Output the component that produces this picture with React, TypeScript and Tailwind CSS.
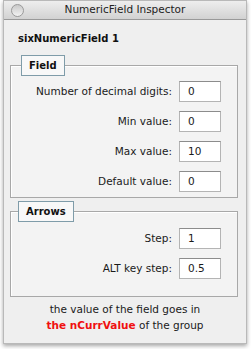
import React from 'react';

interface FieldRow {
  label: string;
  value: string;
}

const fieldRows: FieldRow[] = [
  { label: 'Number of decimal digits:', value: '0' },
  { label: 'Min value:', value: '0' },
  { label: 'Max value:', value: '10' },
  { label: 'Default value:', value: '0' },
];

const arrowRows: FieldRow[] = [
  { label: 'Step:', value: '1' },
  { label: 'ALT key step:', value: '0.5' },
];

const Row: React.FC<{ row: FieldRow }> = ({ row }) => (
  <div className="flex items-center justify-end gap-[7px]">
    <span className="text-[10.5px] text-[#1a1a1a]">{row.label}</span>
    <div className="w-[42px] h-[21px] bg-white border border-[#b4b4b4] border-t-[#8c8c8c] flex items-center pl-[8px] text-[10.5px] text-[#1a1a1a]">
      {row.value}
    </div>
  </div>
);

const GroupBox: React.FC<{ title: string; tabLeft: string; className: string; rows: FieldRow[] }> = ({
  title,
  tabLeft,
  className,
  rows,
}) => (
  <div className={`relative ml-[6px] mr-[8px] border border-[#a8a8a8] bg-[#f3f3f3] shadow-[inset_1px_1px_0_#ffffff] ${className}`}>
    {/* Tab label over the top border */}
    <div
      className={`absolute top-[-11px] ${tabLeft} h-[21px] px-[7px] flex items-center bg-[#f8f8f8] border border-[#7f9ca9] text-[10px] font-bold text-[#111]`}
    >
      {title}
    </div>
    <div className="flex flex-col gap-[9px]">
      {rows.map((row) => (
        <Row key={row.label} row={row} />
      ))}
    </div>
  </div>
);

const App: React.FC = () => {
  return (
    <div className="w-[251px] h-[349px] bg-white" style={{ fontFamily: '"DejaVu Sans", Verdana, sans-serif' }}>
      <div className="ml-[3px] w-[244px] h-[344px] flex flex-col bg-[#efefef] border border-[#b9b9b9] shadow-[0_2px_4px_rgba(0,0,0,0.35)]">
        {/* Title bar */}
        <div className="relative h-[19px] shrink-0 flex items-center justify-center bg-gradient-to-b from-[#eeeeee] to-[#d2d2d2] border-b border-[#999999]">
          <div className="absolute left-[7px] top-[3px] w-[13px] h-[13px] rounded-full border border-[#9a9a9a] bg-gradient-to-b from-[#c9c9c9] to-[#f2f2f2]" />
          <span className="text-[10.5px] text-[#222]">NumericField Inspector</span>
        </div>

        <div className="pl-[14px] mt-[13px] text-[10px] font-bold text-[#111] leading-[12px]">sixNumericField 1</div>

        <GroupBox title="Field" tabLeft="left-[10px]" className="mt-[20px] pt-[15px] pb-[5px] pr-[16px]" rows={fieldRows} />

        <GroupBox title="Arrows" tabLeft="left-[7px]" className="mt-[13px] pt-[16px] pb-[17px] pr-[16px]" rows={arrowRows} />

        <div className="mt-[4px] flex flex-col items-center text-[10.5px] leading-[16px] text-[#1a1a1a]">
          <span>the value of the field goes in</span>
          <span>
            <span className="font-bold text-[#f01010]">the nCurrValue</span> of the group
          </span>
        </div>
      </div>
    </div>
  );
};

export default App;
